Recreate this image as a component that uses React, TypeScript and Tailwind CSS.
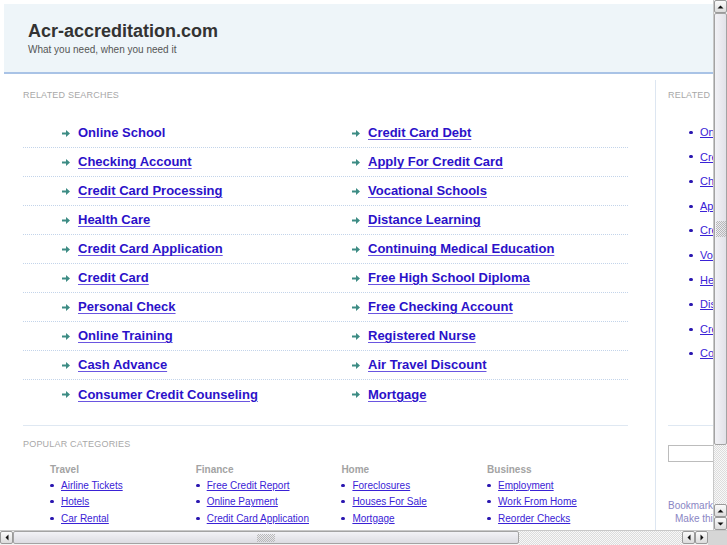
import type { ReactNode } from 'react'

const leftLinks = [
  'Online School',
  'Checking Account',
  'Credit Card Processing',
  'Health Care',
  'Credit Card Application',
  'Credit Card',
  'Personal Check',
  'Online Training',
  'Cash Advance',
  'Consumer Credit Counseling',
]

const rightLinks = [
  'Credit Card Debt',
  'Apply For Credit Card',
  'Vocational Schools',
  'Distance Learning',
  'Continuing Medical Education',
  'Free High School Diploma',
  'Free Checking Account',
  'Registered Nurse',
  'Air Travel Discount',
  'Mortgage',
]

const sideLinks = [
  'Online School',
  'Credit Card Debt',
  'Checking Account',
  'Apply For Credit Card',
  'Credit Card Processing',
  'Vocational Schools',
  'Health Care',
  'Distance Learning',
  'Credit Card Application',
  'Continuing Medical Education',
]

const categories = [
  { title: 'Travel', links: ['Airline Tickets', 'Hotels', 'Car Rental'] },
  { title: 'Finance', links: ['Free Credit Report', 'Online Payment', 'Credit Card Application'] },
  { title: 'Home', links: ['Foreclosures', 'Houses For Sale', 'Mortgage'] },
  { title: 'Business', links: ['Employment', 'Work From Home', 'Reorder Checks'] },
]

function Arrow() {
  return (
    <svg width="8" height="7" viewBox="0 0 8 7" className="shrink-0">
      <path d="M0 2.5h4V0l4 3.5L4 7V4.5H0z" fill="#3d8c84" />
    </svg>
  )
}

function Bullet() {
  return <span className="inline-block h-[3px] w-[4px] shrink-0 rounded-full bg-[#2a17b0]" />
}

function MainLink({ text, plain }: { text: string; plain?: boolean }) {
  return (
    <div className="flex items-center gap-[8px]">
      <Arrow />
      <a
        href="#"
        className={
          'text-[13px] font-bold text-[#2b11c9] ' +
          (plain ? 'no-underline' : 'underline underline-offset-[2px] decoration-[#6a55e0]')
        }
      >
        {text}
      </a>
    </div>
  )
}

function SectionLabel({ children }: { children: ReactNode }) {
  return (
    <div className="text-[9px] leading-[11px] tracking-[0.2px] text-[#a8a8a8] whitespace-nowrap">
      {children}
    </div>
  )
}

function Tri({ dir }: { dir: 'up' | 'down' | 'left' | 'right' }) {
  const d = {
    up: 'M0.5 4.5L3.5 1.5L6.5 4.5Z',
    down: 'M0.5 1.5L3.5 4.5L6.5 1.5Z',
    left: 'M4.5 0.5L1.5 3.5L4.5 6.5Z',
    right: 'M1.5 0.5L4.5 3.5L1.5 6.5Z',
  }[dir]
  const size = dir === 'up' || dir === 'down' ? { w: 7, h: 6 } : { w: 6, h: 7 }
  return (
    <svg width={size.w} height={size.h} viewBox={`0 0 ${size.w} ${size.h}`}>
      <path d={d} fill="#111" />
    </svg>
  )
}

function ScrollButton({ dir }: { dir: 'up' | 'down' | 'left' | 'right' }) {
  return (
    <div className="flex h-[13px] w-[13px] items-center justify-center rounded-[2px] border border-[#9a9a9a] bg-gradient-to-b from-[#fbfbfb] to-[#dcdcdc]">
      <Tri dir={dir} />
    </div>
  )
}

function Grip({ vertical }: { vertical?: boolean }) {
  return (
    <div
      className={
        'bg-[repeating-conic-gradient(#b8b8b8_0_25%,transparent_0_50%)] bg-size-[2px_2px] ' +
        (vertical ? 'h-[16px] w-[10px]' : 'h-[8px] w-[18px]')
      }
    />
  )
}

export default function App() {
  return (
    <div className="flex h-[545px] w-[727px] flex-col overflow-hidden bg-[#d6d6d6] font-['Liberation_Sans',Arial,sans-serif]">
      <div className="flex h-[530px]">
        <div className="relative h-[530px] w-[713px] overflow-hidden bg-white">
          <div className="w-[1000px] pt-[4px]">
            <header className="ml-[4px] h-[70px] border-b-2 border-[#a9c3e6] bg-[#eef5f9] pl-[24px] pt-[17px]">
              <div className="text-[18px] font-bold leading-[20px] text-[#333]">Acr-accreditation.com</div>
              <div className="mt-[3px] text-[10px] leading-[12px] text-[#555]">What you need, when you need it</div>
            </header>

            <div className="mt-[6px] flex">
              <section className="ml-[23px] w-[605px] shrink-0 pt-[10px]">
                <SectionLabel>RELATED SEARCHES</SectionLabel>
                <div className="mt-[18px]">
                  {leftLinks.map((l, i) => (
                    <div
                      key={l}
                      className={
                        'flex h-[29px] items-center ' +
                        (i < leftLinks.length - 1 ? 'border-b border-dotted border-[#c3d4ea]' : '')
                      }
                    >
                      <div className="w-[330px] shrink-0 pl-[39px]">
                        <MainLink text={l} plain={i === 0} />
                      </div>
                      <div className="-ml-[1px]">
                        <MainLink text={rightLinks[i]} />
                      </div>
                    </div>
                  ))}
                </div>

                <div className="mt-[16px] border-t border-[#dfe8f2] pt-[13px]">
                  <SectionLabel>POPULAR CATEGORIES</SectionLabel>
                  <div className="mt-[13px] flex pl-[27px]">
                    {categories.map((c) => (
                      <div key={c.title} className="w-[145.7px] shrink-0">
                        <div className="text-[10px] font-bold leading-[13px] text-[#a3a3a3]">{c.title}</div>
                        <div className="mt-[1px]">
                          {c.links.map((l) => (
                            <div key={l} className="flex h-[16.5px] items-center gap-[7px]">
                              <Bullet />
                              <a href="#" className="text-[10px] text-[#3a22d6] underline whitespace-nowrap">
                                {l}
                              </a>
                            </div>
                          ))}
                        </div>
                      </div>
                    ))}
                  </div>
                </div>
              </section>

              <aside className="ml-[27px] h-[460px] w-[250px] shrink-0 border-l border-[#dde6f1] pl-[12px] pt-[10px]">
                <SectionLabel>RELATED SEARCHES</SectionLabel>
                <div className="mt-[19px]">
                  {sideLinks.map((l) => (
                    <div key={l} className="flex h-[24.6px] items-center gap-[7px] pl-[21px]">
                      <Bullet />
                      <a href="#" className="text-[11px] text-[#3a22d6] underline whitespace-nowrap">
                        {l}
                      </a>
                    </div>
                  ))}
                </div>
                <div className="mt-[59px] border-t border-[#dfe8f2]" />
                <div className="mt-[19px] h-[17px] w-[200px] border border-[#bcbcbc] bg-white" />
                <div className="mt-[37px] text-[10px] leading-[13px] text-[#8a86c4] whitespace-nowrap">
                  Bookmark this page
                </div>
                <div className="pl-[7px] text-[10px] leading-[13px] text-[#8a86c4] whitespace-nowrap">
                  Make this your homepage
                </div>
              </aside>
            </div>
          </div>
        </div>

        <div className="flex h-[530px] w-[14px] flex-col border-l border-[#c8c8c8] bg-[#f4f4f4]">
          <ScrollButton dir="up" />
          <div className="flex h-[432px] w-[13px] items-center justify-center rounded-[2px] border border-[#a3a3a3] bg-gradient-to-r from-[#f2f2f6] to-[#e2e2e8]">
            <Grip vertical />
          </div>
          <div className="flex-1 bg-[repeating-conic-gradient(#dcdcdc_0_25%,#f8f8f8_0_50%)] bg-size-[2px_2px]" />
          <ScrollButton dir="up" />
          <ScrollButton dir="down" />
        </div>
      </div>

      <div className="flex h-[15px] border-t border-[#c8c8c8] bg-[#f4f4f4]">
        <ScrollButton dir="left" />
        <div className="flex h-[13px] w-[506px] items-center justify-center rounded-[2px] border border-[#a3a3a3] bg-gradient-to-b from-[#f2f2f6] to-[#dcdce2]">
          <Grip />
        </div>
        <div className="w-[163px] bg-[repeating-conic-gradient(#dcdcdc_0_25%,#f8f8f8_0_50%)] bg-size-[2px_2px]" />
        <ScrollButton dir="left" />
        <ScrollButton dir="right" />
        <div className="flex-1 bg-[#d6d6d6]" />
      </div>
    </div>
  )
}
